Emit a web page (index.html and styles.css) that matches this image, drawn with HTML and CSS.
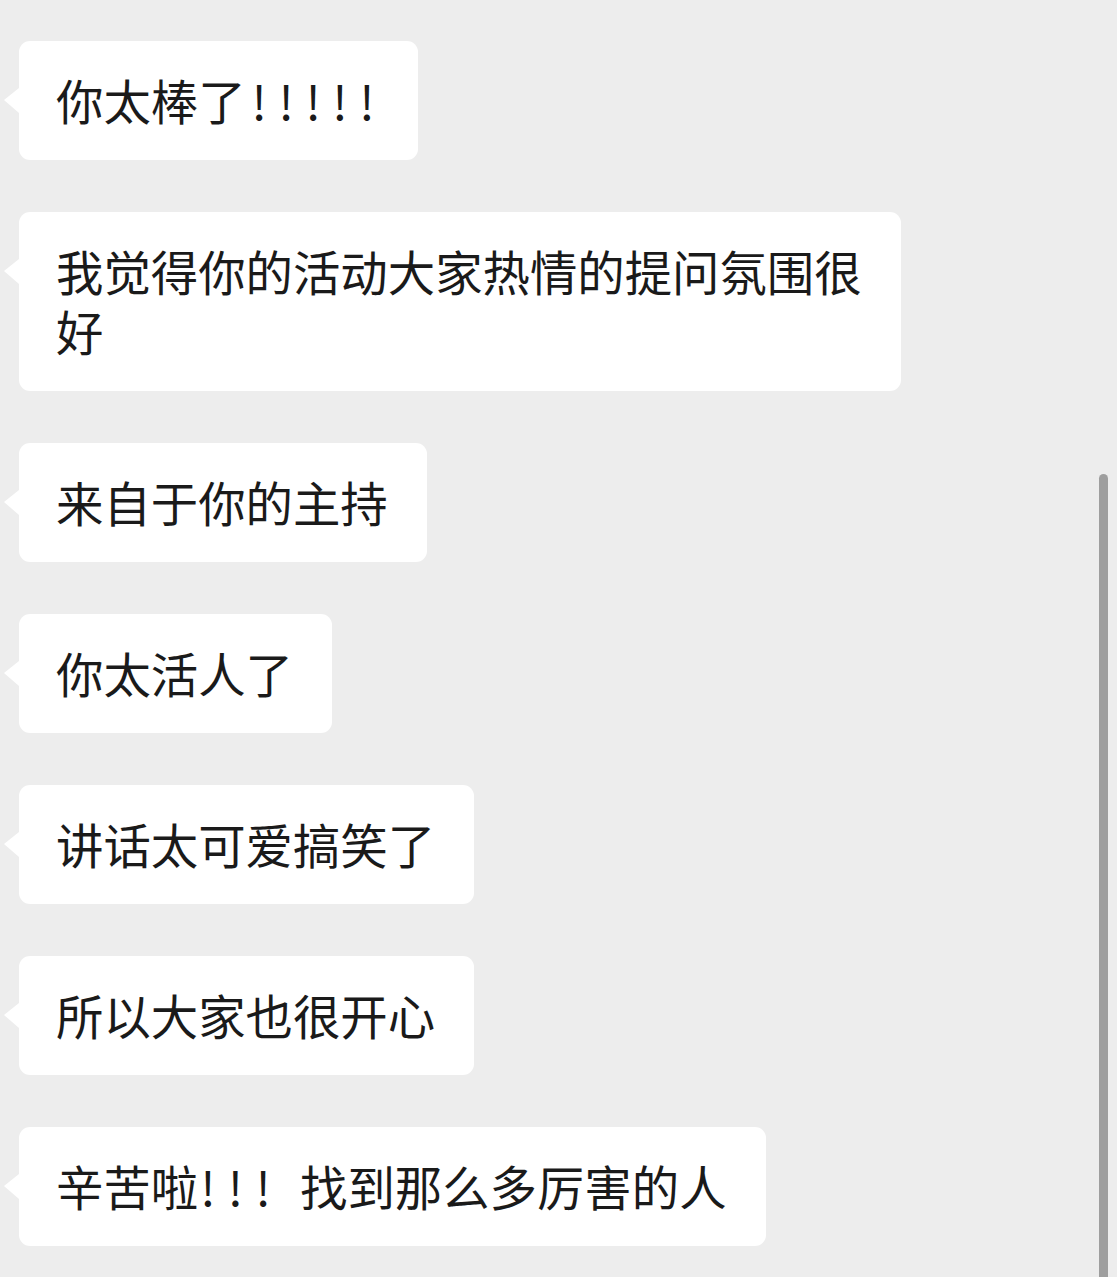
FILE: index.html
```html
<!DOCTYPE html>
<html lang="zh-CN">
<head>
    <meta charset="UTF-8">
    <meta name="viewport" content="width=device-width, initial-scale=1.0">
    <title>聊天记录</title>
    <link rel="stylesheet" href="styles.css">
</head>
<body>
    <main class="chat">
        <div class="bubble bubble-bang">你太棒了<span class="bang">!!!!!</span></div>
        <div class="bubble">我觉得你的活动大家热情的提问氛围很好</div>
        <div class="bubble">来自于你的主持</div>
        <div class="bubble">你太活人了</div>
        <div class="bubble">讲话太可爱搞笑了</div>
        <div class="bubble">所以大家也很开心</div>
        <div class="bubble">辛苦啦<span class="bang tight">!!!</span>找到那么多厉害的人</div>
    </main>

    <!-- 滚动条 -->
    <div class="scrollbar"></div>
</body>
</html>
```

FILE: styles.css
```css
/* Общие стили */
body {
    margin: 0;
    background: #ededed;
    font-family: "Noto Sans CJK SC", "Noto Sans", sans-serif;
    color: #1a1a1a;
    height: 1277px;
    overflow: hidden;
    position: relative;
}

.chat {
    display: flex;
    flex-direction: column;
    align-items: flex-start;
    gap: 52px;
    padding: 41px 0 0 19px;
}

.bubble {
    position: relative;
    background: #fff;
    border-radius: 11px;
    font-size: 47.4px;
    line-height: 60px;
    padding: 29px 39px 30px 37px;
    max-width: 806px;
}

/* хвостик пузыря */
.bubble::before {
    content: "";
    position: absolute;
    left: -15px;
    top: 47px;
    border-right: 15px solid #fff;
    border-top: 12px solid transparent;
    border-bottom: 13px solid transparent;
}

.bubble-bang {
    white-space: nowrap;
    padding-right: 32px;
}

.bang {
    white-space: nowrap;
    letter-spacing: 11.6px;
    margin-left: 6px;
}

.bang.tight {
    letter-spacing: 12.3px;
    margin-left: 2px;
    margin-right: 17px;
}

.scrollbar {
    position: absolute;
    left: 1099px;
    top: 474px;
    width: 9px;
    bottom: 0;
    background: #9e9e9e;
    border-radius: 5px 5px 0 0;
}
```
